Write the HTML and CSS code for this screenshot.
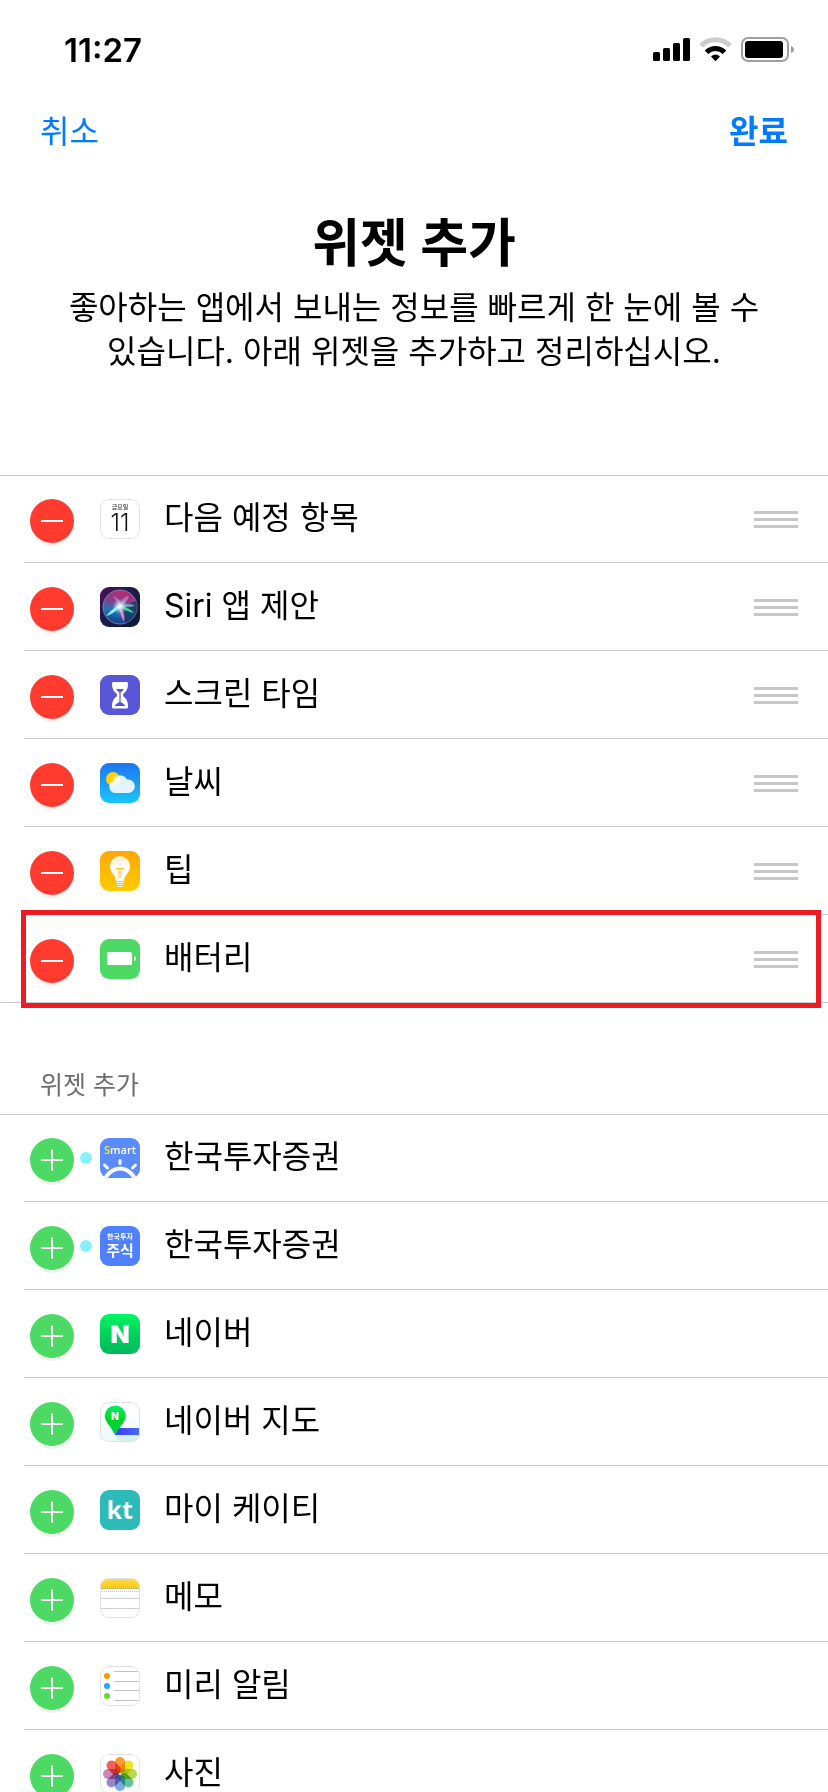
FILE: index.html
```html
<!DOCTYPE html>
<html lang="ko">
<head>
    <meta charset="UTF-8">
    <meta name="viewport" content="width=device-width, initial-scale=1.0">
    <title>위젯 추가</title>
    <link rel="stylesheet" href="styles.css">
</head>
<body>
    <div class="status-bar">
        <span class="time">11:27</span>
        <svg width="142" height="26" viewBox="0 0 142 26" aria-hidden="true">
            <rect x="0" y="15" width="7" height="9" rx="1.5"/>
            <rect x="10" y="11" width="7" height="13" rx="1.5"/>
            <rect x="20" y="6" width="7" height="18" rx="1.5"/>
            <rect x="30" y="1" width="7" height="23" rx="1.5"/>
            <path d="M48 8.8A20.5 20.5 0 0 1 77 8.8" fill="none" stroke="#ccc" stroke-width="5"/>
            <path d="M53.5 15.3A12.5 12.5 0 0 1 71.5 15.3" fill="none" stroke="#000" stroke-width="5"/>
            <path d="M58 19.5Q62.5 15.5 67 19.5L62.5 24.3z"/>
            <rect x="89" y="1" width="46" height="23" rx="6" fill="none" stroke="#a0a0a0" stroke-width="2"/>
            <rect x="92" y="4" width="38" height="17" rx="3"/>
            <path d="M138 9q3 1 3 3.5t-3 3.5z" fill="#a0a0a0"/>
        </svg>
    </div>

    <nav class="nav">
        <button type="button" class="nav-btn">취소</button>
        <button type="button" class="nav-btn done">완료</button>
    </nav>

    <header class="intro">
        <h1>위젯 추가</h1>
        <p>좋아하는 앱에서 보내는 정보를 빠르게 한 눈에 볼 수 있습니다. 아래 위젯을 추가하고 정리하십시오.</p>
    </header>

    <ul class="list">
        <li class="row">
            <button type="button" class="toggle remove" aria-label="삭제"></button>
            <svg class="icon light" viewBox="0 0 40 40" aria-hidden="true">
                <text x="20" y="10" class="cal-day">금요일</text>
                <text x="20" y="32" class="cal-date">11</text>
            </svg>
            <span class="name">다음 예정 항목</span>
            <button type="button" class="handle" aria-label="순서 변경"></button>
        </li>
        <li class="row">
            <button type="button" class="toggle remove" aria-label="삭제"></button>
            <svg class="icon" viewBox="0 0 40 40" aria-hidden="true">
                <defs>
                    <linearGradient id="siriBg" x1="0" y1="0" x2="1" y2="1">
                        <stop offset="0" stop-color="#4a0d5e"/>
                        <stop offset=".45" stop-color="#1d1a4a"/>
                        <stop offset="1" stop-color="#0a1c36"/>
                    </linearGradient>
                    <linearGradient id="siriOrb" x1=".6" y1="0" x2=".4" y2="1">
                        <stop offset="0" stop-color="#c2256f"/>
                        <stop offset=".4" stop-color="#7a4390"/>
                        <stop offset=".65" stop-color="#1c79b5"/>
                        <stop offset="1" stop-color="#123a86"/>
                    </linearGradient>
                    <radialGradient id="siriGlow">
                        <stop offset="0" stop-color="#fff"/>
                        <stop offset=".35" stop-color="#cff6ff" stop-opacity=".8"/>
                        <stop offset="1" stop-color="#8be" stop-opacity="0"/>
                    </radialGradient>
                </defs>
                <rect width="40" height="40" fill="url(#siriBg)"/>
                <circle cx="20" cy="20" r="17" fill="url(#siriOrb)" stroke="#7d7fae"/>
                <path d="M21 20L36 14A17 17 0 0 1 25 36z" fill="#11335c" opacity=".75"/>
                <path d="M20 20Q14 11 13 9Q22 12 21 20z" fill="#f07ba8" opacity=".6"/>
                <path d="M20 20Q22 9 29 9Q27 16 20 20z" fill="#e0a0c8" opacity=".55"/>
                <path d="M20 20Q29 14 35 19Q28 21 20 20z" fill="#8fe0e0" opacity=".6"/>
                <path d="M20 19Q31 21 34 26Q25 24 20 20z" fill="#35e08e" opacity=".9"/>
                <path d="M20 20Q12 28 6 29Q13 21 19 18z" fill="#8df0ff"/>
                <path d="M20 20Q26 27 24 35Q20 28 19 20z" fill="#ff78b4"/>
                <circle cx="20" cy="19.5" r="8" fill="url(#siriGlow)"/>
            </svg>
            <span class="name">Siri 앱 제안</span>
            <button type="button" class="handle" aria-label="순서 변경"></button>
        </li>
        <li class="row">
            <button type="button" class="toggle remove" aria-label="삭제"></button>
            <svg class="icon" viewBox="0 0 40 40" aria-hidden="true">
                <rect width="40" height="40" fill="#5856d6"/>
                <path d="M13.5 7h13Q28.5 7 28 9.5C28 14 26 16.5 23.5 18.5Q22.5 20 23.5 21.5C26 23.5 28 26 28 30.5Q28.5 33.5 26.5 33.5h-13Q11.5 33.5 12 30.5C12 26 14 23.5 16.5 21.5Q17.5 20 16.5 18.5C14 16.5 12 14 12 9.5Q11.5 7 13.5 7z" fill="#fff"/>
                <path d="M16 14h8Q22.5 16 20.6 17.5V27Q24 28.5 25.5 31h-11Q16 28.5 19.4 27V17.5Q17.5 16 16 14z" fill="#5856d6"/>
            </svg>
            <span class="name">스크린 타임</span>
            <button type="button" class="handle" aria-label="순서 변경"></button>
        </li>
        <li class="row">
            <button type="button" class="toggle remove" aria-label="삭제"></button>
            <svg class="icon" viewBox="0 0 40 40" aria-hidden="true">
                <defs>
                    <linearGradient id="sky" x1="0" y1="0" x2="0" y2="1">
                        <stop offset="0" stop-color="#1d74f2"/>
                        <stop offset="1" stop-color="#1ac5fb"/>
                    </linearGradient>
                </defs>
                <rect width="40" height="40" fill="url(#sky)"/>
                <circle cx="13" cy="16" r="7" fill="#ffd109"/>
                <path d="M15 30a6 6 0 0 1-2-11.5a7.5 7.5 0 0 1 14-2a6.7 6.7 0 1 1 2 13.5z" fill="#fff" opacity=".88"/>
            </svg>
            <span class="name">날씨</span>
            <button type="button" class="handle" aria-label="순서 변경"></button>
        </li>
        <li class="row">
            <button type="button" class="toggle remove" aria-label="삭제"></button>
            <svg class="icon" viewBox="0 0 40 40" aria-hidden="true">
                <defs>
                    <linearGradient id="tipsBg" x1="0" y1="0" x2="0" y2="1">
                        <stop offset="0" stop-color="#ffa502"/>
                        <stop offset="1" stop-color="#ffcc02"/>
                    </linearGradient>
                    <linearGradient id="bulb" x1="0" y1="0" x2="0" y2="1">
                        <stop offset="0" stop-color="#ffedcc"/>
                        <stop offset=".5" stop-color="#fff"/>
                    </linearGradient>
                </defs>
                <rect width="40" height="40" fill="url(#tipsBg)"/>
                <path d="M16 30C16 24 10 22 10 15a10 10 0 0 1 20 0C30 22 24 24 24 30z" fill="url(#bulb)"/>
                <path d="M16 17.5h8M19 17v10M21 17v10" stroke="#ffc12a" fill="none"/>
                <path d="M16 31.5h8M17 33.5h6M18 35.5h4" stroke="#fff" fill="none"/>
            </svg>
            <span class="name">팁</span>
            <button type="button" class="handle" aria-label="순서 변경"></button>
        </li>
        <li class="row highlight">
            <button type="button" class="toggle remove" aria-label="삭제"></button>
            <svg class="icon" viewBox="0 0 40 40" aria-hidden="true">
                <rect width="40" height="40" fill="#4cd964"/>
                <rect x="7" y="13" width="25" height="13" rx="1.5" fill="#fff"/>
                <path d="M34 17q2 .5 2 2.5t-2 2.5z" fill="#fff"/>
            </svg>
            <span class="name">배터리</span>
            <button type="button" class="handle" aria-label="순서 변경"></button>
        </li>
    </ul>

    <h2 class="section-title">위젯 추가</h2>

    <ul class="list">
        <li class="row">
            <button type="button" class="toggle add" aria-label="추가"></button>
            <span class="dot"></span>
            <svg class="icon" viewBox="0 0 40 40" aria-hidden="true">
                <rect width="40" height="40" fill="#5a8cff"/>
                <text x="20" y="16" class="smart"><tspan fill="#f4f01c">S</tspan>mart</text>
                <g fill="none" stroke="#fff" stroke-linecap="round">
                    <path d="M5 40.5Q11 30.5 20 30.5T35 40.5" stroke-width="4"/>
                    <path d="M20 22.5v3M4.5 27l3 3M35.5 27l-3 3" stroke-width="3"/>
                </g>
            </svg>
            <span class="name">한국투자증권</span>
        </li>
        <li class="row">
            <button type="button" class="toggle add" aria-label="추가"></button>
            <span class="dot"></span>
            <svg class="icon" viewBox="0 0 40 40" aria-hidden="true">
                <rect width="40" height="40" fill="#4f80ff"/>
                <text x="20" y="13" class="invest">한국투자</text>
                <text x="20" y="30" class="stock">주식</text>
            </svg>
            <span class="name">한국투자증권</span>
        </li>
        <li class="row">
            <button type="button" class="toggle add" aria-label="추가"></button>
            <svg class="icon" viewBox="0 0 40 40" aria-hidden="true">
                <defs>
                    <linearGradient id="naver" x1="0" y1="0" x2="0" y2="1">
                        <stop offset="0" stop-color="#00f566"/>
                        <stop offset=".45" stop-color="#00d65b"/>
                        <stop offset="1" stop-color="#00b85f"/>
                    </linearGradient>
                </defs>
                <rect width="40" height="40" fill="url(#naver)"/>
                <text x="20" y="29" class="naver">N</text>
            </svg>
            <span class="name">네이버</span>
        </li>
        <li class="row">
            <button type="button" class="toggle add" aria-label="추가"></button>
            <svg class="icon light" viewBox="0 0 40 40" aria-hidden="true">
                <defs>
                    <linearGradient id="mapBg" x1="0" y1="0" x2="0" y2="1">
                        <stop offset="0" stop-color="#fff"/>
                        <stop offset="1" stop-color="#edfafd"/>
                    </linearGradient>
                    <linearGradient id="pin" x1="0" y1="0" x2="0" y2="1">
                        <stop offset="0" stop-color="#00ef66"/>
                        <stop offset=".5" stop-color="#06d420"/>
                        <stop offset="1" stop-color="#00c860"/>
                    </linearGradient>
                    <linearGradient id="road">
                        <stop offset="0" stop-color="#3b3cf0"/>
                        <stop offset="1" stop-color="#4a6cff"/>
                    </linearGradient>
                </defs>
                <rect width="40" height="40" fill="url(#mapBg)"/>
                <path d="M15 33h25v7H19z" fill="#d3f0f3"/>
                <path d="M18 26h22v7H15z" fill="url(#road)"/>
                <path d="M15 33Q11.5 26 7 20.5A10.5 10.5 0 1 1 23.5 20.5Q18.5 27 15 33z" fill="url(#pin)"/>
                <text x="15" y="18" class="map-n">N</text>
            </svg>
            <span class="name">네이버 지도</span>
        </li>
        <li class="row">
            <button type="button" class="toggle add" aria-label="추가"></button>
            <svg class="icon" viewBox="0 0 40 40" aria-hidden="true">
                <rect width="40" height="40" fill="#2dbbb9"/>
                <text x="20" y="29" class="kt">kt</text>
            </svg>
            <span class="name">마이 케이티</span>
        </li>
        <li class="row">
            <button type="button" class="toggle add" aria-label="추가"></button>
            <svg class="icon light" viewBox="0 0 40 40" aria-hidden="true">
                <defs>
                    <linearGradient id="memo" x1="0" y1="0" x2="0" y2="1">
                        <stop offset="0" stop-color="#ffdc53"/>
                        <stop offset="1" stop-color="#fdc908"/>
                    </linearGradient>
                </defs>
                <rect width="40" height="10" fill="url(#memo)"/>
                <path d="M0 10.5h40" stroke="#c9b878"/>
                <path d="M0 13.5h40" stroke="#c8c8c8" stroke-dasharray="1 1"/>
                <path d="M0 20.5h40M0 30.5h40" stroke="#d0d0d2"/>
            </svg>
            <span class="name">메모</span>
        </li>
        <li class="row">
            <button type="button" class="toggle add" aria-label="추가"></button>
            <svg class="icon light" viewBox="0 0 40 40" aria-hidden="true">
                <circle cx="7" cy="10" r="3" fill="#ff9500"/>
                <circle cx="7" cy="20" r="3" fill="#1badf8"/>
                <circle cx="7" cy="30" r="3" fill="#63da38"/>
                <path d="M14 5.5h24M14 15.5h26M14 24.5h26M14 34.5h25" stroke="#c3c3c7"/>
            </svg>
            <span class="name">미리 알림</span>
        </li>
        <li class="row">
            <button type="button" class="toggle add" aria-label="추가"></button>
            <svg class="icon light" viewBox="0 0 40 40" aria-hidden="true">
                <g class="petals">
                    <rect x="15" y="3" width="10" height="16" rx="5" fill="#fa9a2b"/>
                    <rect x="15" y="3" width="10" height="16" rx="5" fill="#f2e21f" transform="rotate(45 20 20)"/>
                    <rect x="15" y="3" width="10" height="16" rx="5" fill="#b9d84c" transform="rotate(90 20 20)"/>
                    <rect x="15" y="3" width="10" height="16" rx="5" fill="#67c29a" transform="rotate(135 20 20)"/>
                    <rect x="15" y="3" width="10" height="16" rx="5" fill="#74aee3" transform="rotate(180 20 20)"/>
                    <rect x="15" y="3" width="10" height="16" rx="5" fill="#9a86c6" transform="rotate(225 20 20)"/>
                    <rect x="15" y="3" width="10" height="16" rx="5" fill="#cf84b4" transform="rotate(270 20 20)"/>
                    <rect x="15" y="3" width="10" height="16" rx="5" fill="#f0625a" transform="rotate(315 20 20)"/>
                </g>
            </svg>
            <span class="name">사진</span>
        </li>
    </ul>
</body>
</html>
```
FILE: styles.css
```css
* {
    box-sizing: border-box;
}
body {
    margin: 0;
    height: 100vh;
    overflow: hidden;
    background: #fff;
    color: #000;
    font-family: Inter, "Noto Sans CJK KR", sans-serif;
    font-size: 32px;
    line-height: 44px;
}
button {
    border: none;
    padding: 0;
    background: none;
    font: inherit;
    cursor: pointer;
}
.status-bar {
    display: flex;
    justify-content: space-between;
    align-items: center;
    height: 100px;
    padding: 0 33px 0 64px;
}
.time {
    font-size: 33px;
    font-weight: 600;
}
.nav {
    display: flex;
    justify-content: space-between;
    align-items: center;
    height: 64px;
    padding: 0 40px;
}
.nav-btn {
    color: #007aff;
}
.done {
    font-weight: 700;
}
.intro {
    padding: 48px 60px 101px;
    text-align: center;
}
.intro h1 {
    margin: 0 0 10px;
    font-size: 52px;
    line-height: 64px;
    font-weight: 700;
}
.intro p {
    margin: 0;
    word-break: keep-all;
}

/* lists */
.list {
    margin: 0;
    padding: 0;
    list-style: none;
    box-shadow: inset 0 1px #c8c7cc, inset 0 -1px #c8c7cc;
}
.row {
    position: relative;
    display: grid;
    grid-template-columns: 44px 26px 40px 1fr 44px;
    align-items: center;
    height: 88px;
    padding: 0 30px;
}
.row:not(:last-child)::after {
    content: "";
    position: absolute;
    left: 24px;
    right: 0;
    bottom: 0;
    height: 1px;
    background: #c8c7cc;
}
.highlight::before {
    content: "";
    position: absolute;
    inset: -5px 7px -5px 21px;
    border: 5px solid #ed1c24;
    pointer-events: none;
}
.toggle {
    width: 44px;
    height: 44px;
    margin-top: 4px;
    border-radius: 50%;
    box-shadow: 0 4px 1px -1px rgba(0, 0, 0, 0.06);
    background-position: center;
    background-repeat: no-repeat;
}
.remove {
    background-color: #ff3b30;
    background-image: linear-gradient(#fff, #fff);
    background-size: 22px 2px;
}
.add {
    background-color: #4cd964;
    background-image: linear-gradient(#fff, #fff), linear-gradient(#fff, #fff);
    background-size: 22px 2px, 2px 22px;
}
.dot {
    grid-column: 2;
    width: 12px;
    height: 12px;
    margin-left: 6px;
    border-radius: 50%;
    background: #87f0ff;
}
.icon {
    grid-column: 3;
    display: block;
    width: 40px;
    height: 40px;
    border-radius: 9px;
    overflow: hidden;
}
.light {
    outline: 1px solid #e3e3e3;
    outline-offset: -1px;
}
.name {
    padding: 0 0 2px 24px;
}
.handle {
    display: block;
    height: 17px;
    background: repeating-linear-gradient(#c7c7cc 0 3px, transparent 3px 7px);
}
.section-title {
    margin: 0;
    padding: 64px 40px 11px;
    color: #6d6d72;
    font-size: 25px;
    line-height: 36px;
    font-weight: 400;
}

/* lettering inside the app icons */
.icon text {
    text-anchor: middle;
    fill: #fff;
}
.icon .cal-day {
    font-size: 6px;
    font-weight: 500;
    fill: #333;
}
.icon .cal-date {
    font-size: 24px;
    font-weight: 300;
    fill: #111;
}
.smart {
    font-family: "Open Sans", sans-serif;
    font-size: 11px;
    font-weight: 600;
}
.invest {
    font-size: 7px;
    font-weight: 700;
}
.stock {
    font-size: 15px;
    font-weight: 700;
}
.naver {
    font-size: 25px;
    font-weight: 900;
}
.map-n {
    font-size: 10px;
    font-weight: 900;
}
.kt {
    font-family: "Open Sans", sans-serif;
    font-size: 25px;
    font-weight: 700;
}
.petals rect {
    mix-blend-mode: multiply;
}
```
